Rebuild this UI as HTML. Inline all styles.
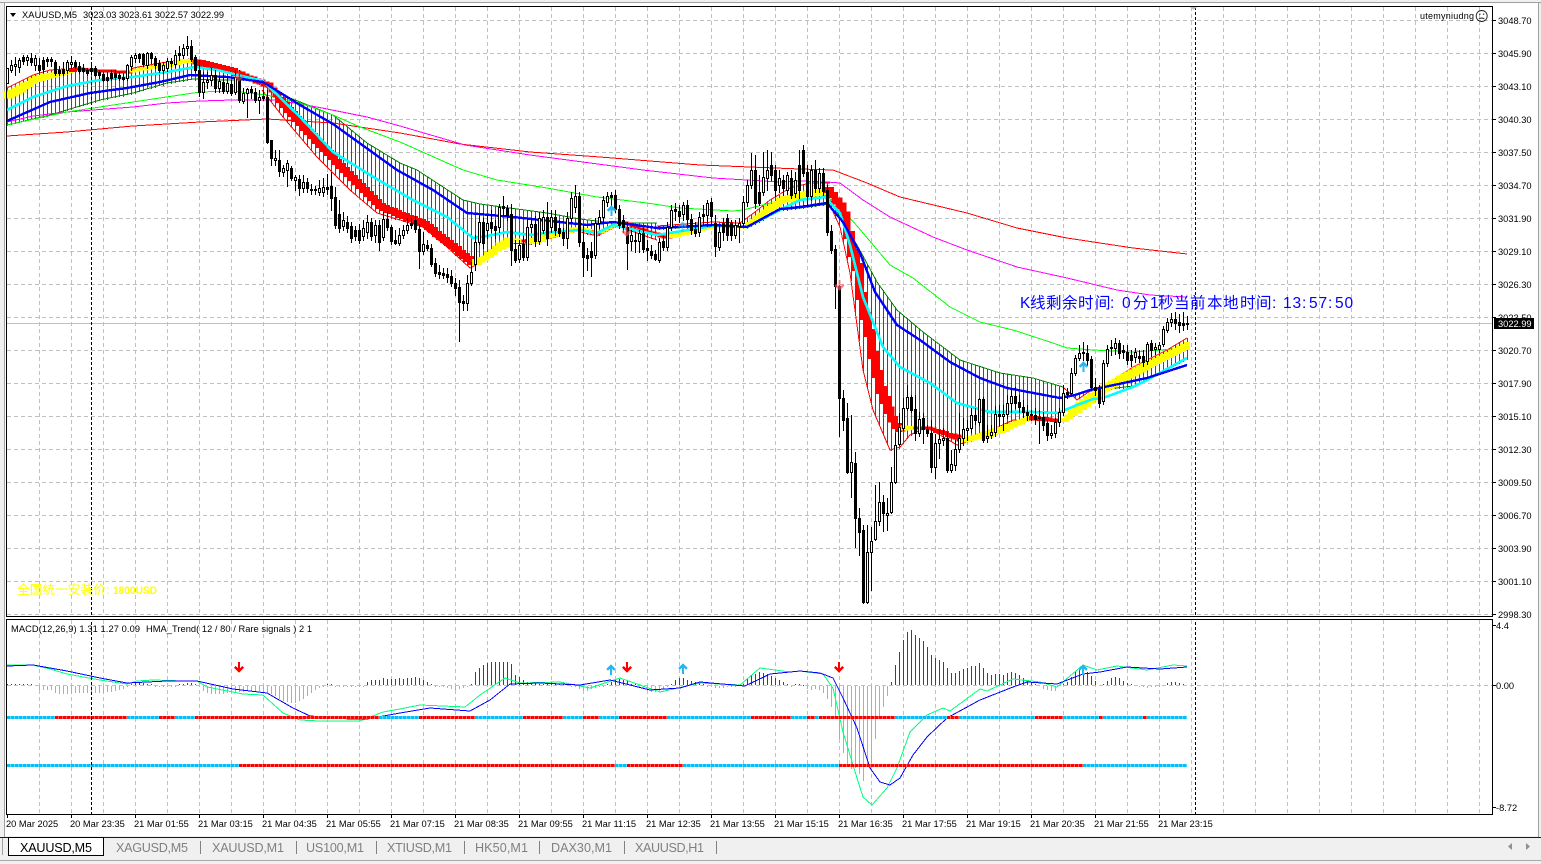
<!DOCTYPE html>
<html><head><meta charset="utf-8"><title>XAUUSD,M5</title>
<style>
html,body{margin:0;padding:0;background:#f0f0f0;width:1541px;height:864px;overflow:hidden}
svg{display:block;position:absolute;left:0;top:0}
text{font-family:"Liberation Sans","Noto Sans CJK SC",sans-serif}
.p{font-size:9.3px;fill:#000}
.t{font-size:9.3px;fill:#000}
.tab{font-size:12.6px;fill:#808080}
</style></head><body>
<svg id="s" width="1541" height="864" viewBox="0 0 1541 864" xmlns="http://www.w3.org/2000/svg">
<rect x="0" y="0" width="1541" height="864" fill="#f0f0f0"/>
<rect x="5" y="3" width="1533" height="833" fill="#fff"/>
<rect x="0" y="2" width="1541" height="1" fill="#a0a0a0"/>
<rect x="4" y="3" width="1" height="834" fill="#a0a0a0"/>
<rect x="1538" y="3" width="1" height="834" fill="#a0a0a0"/>
<g id="grid" shape-rendering="crispEdges"></g>
<g id="ind" shape-rendering="crispEdges"></g>
<g id="cd" shape-rendering="crispEdges"></g>
<g id="sub" shape-rendering="crispEdges"></g>
<g id="fr" shape-rendering="crispEdges"></g>

<path d="M10 13h6l-3 4z" fill="#000"/>
<text x="22" y="18" font-size="9.3" fill="#000" textLength="55" lengthAdjust="spacing">XAUUSD,M5</text>
<text x="83" y="18" font-size="9.3" fill="#000" textLength="141" lengthAdjust="spacing">3023.03 3023.61 3022.57 3022.99</text>
<text x="1420" y="19" font-size="9" fill="#000" textLength="54" lengthAdjust="spacing">utemyniudng</text>
<g fill="none" stroke="#222" stroke-width=".9"><circle cx="1481.700" cy="16" r="5.500"/><path d="M1479 19q2.700-2 5.400 0"/></g>
<circle cx="1479.800" cy="14.200" r=".7" fill="#222"/><circle cx="1483.600" cy="14.200" r=".7" fill="#222"/>

<text y="308" font-size="15.500" fill="#0000ff" x="1020 1030 1046 1062 1078 1095 1110 1116 1122 1133 1150 1158 1174 1190 1207 1223 1240 1256 1272 1278 1283 1292.500 1302 1309 1318.500 1328 1335 1344.500">K线剩余时间: 0分1秒当前本地时间: 13:57:50</text>
<text y="594" font-size="12.700" fill="#ffff00" x="17 29.700 42.400 55.100 67.800 80.500 93.200 106">全国统一安装价:</text>
<text x="113" y="594" font-size="11" font-weight="bold" fill="#ffff00" textLength="44" lengthAdjust="spacingAndGlyphs">1800USD</text>
<text x="11" y="632" font-size="9.300" fill="#000" textLength="129" lengthAdjust="spacing">MACD(12,26,9) 1.31 1.27 0.09</text>
<text x="146" y="632" font-size="9.300" fill="#000" textLength="166" lengthAdjust="spacing">HMA_Trend( 12 / 80 / Rare signals ) 2 1</text>

<g class="p">
<text x="1498" y="24" class="p">3048.70</text><text x="1498" y="57" class="p">3045.90</text><text x="1498" y="90" class="p">3043.10</text><text x="1498" y="123" class="p">3040.30</text><text x="1498" y="156" class="p">3037.50</text><text x="1498" y="189" class="p">3034.70</text><text x="1498" y="222" class="p">3031.90</text><text x="1498" y="255" class="p">3029.10</text><text x="1498" y="288" class="p">3026.30</text><text x="1498" y="321" class="p">3023.50</text><text x="1498" y="354" class="p">3020.70</text><text x="1498" y="387" class="p">3017.90</text><text x="1498" y="420" class="p">3015.10</text><text x="1498" y="453" class="p">3012.30</text><text x="1498" y="486" class="p">3009.50</text><text x="1498" y="519" class="p">3006.70</text><text x="1498" y="552" class="p">3003.90</text><text x="1498" y="585" class="p">3001.10</text><text x="1498" y="618" class="p">2998.30</text>
</g>
<rect x="1494" y="318" width="40" height="11" fill="#000"/>
<text x="1498" y="327" class="p" style="fill:#fff">3022.99</text>
<text x="1496" y="629" class="p">4.4</text>
<text x="1496" y="689" class="p">0.00</text>
<text x="1496" y="811" class="p">-8.72</text>

<g class="t">
<text x="6" y="827" class="t">20 Mar 2025</text><text x="70" y="827" class="t">20 Mar 23:35</text><text x="134" y="827" class="t">21 Mar 01:55</text><text x="198" y="827" class="t">21 Mar 03:15</text><text x="262" y="827" class="t">21 Mar 04:35</text><text x="326" y="827" class="t">21 Mar 05:55</text><text x="390" y="827" class="t">21 Mar 07:15</text><text x="454" y="827" class="t">21 Mar 08:35</text><text x="518" y="827" class="t">21 Mar 09:55</text><text x="582" y="827" class="t">21 Mar 11:15</text><text x="646" y="827" class="t">21 Mar 12:35</text><text x="710" y="827" class="t">21 Mar 13:55</text><text x="774" y="827" class="t">21 Mar 15:15</text><text x="838" y="827" class="t">21 Mar 16:35</text><text x="902" y="827" class="t">21 Mar 17:55</text><text x="966" y="827" class="t">21 Mar 19:15</text><text x="1030" y="827" class="t">21 Mar 20:35</text><text x="1094" y="827" class="t">21 Mar 21:55</text><text x="1158" y="827" class="t">21 Mar 23:15</text>
</g>

<g shape-rendering="crispEdges">
<rect x="0" y="837" width="1541" height="1" fill="#1a1a1a"/>
<rect x="0" y="838" width="1541" height="22" fill="#f0f0f0"/>
<rect x="0" y="860" width="1541" height="1" fill="#a8a8a8"/>
<rect x="2" y="838" width="1" height="17" fill="#a0a0a0"/>
<rect x="8" y="837" width="96" height="19" fill="#000"/>
<rect x="9" y="838" width="94" height="17" fill="#fff"/>
<rect x="200" y="841" width="1" height="13" fill="#808080"/><rect x="296" y="841" width="1" height="13" fill="#808080"/><rect x="376" y="841" width="1" height="13" fill="#808080"/><rect x="464" y="841" width="1" height="13" fill="#808080"/><rect x="539" y="841" width="1" height="13" fill="#808080"/><rect x="624" y="841" width="1" height="13" fill="#808080"/><rect x="716" y="841" width="1" height="13" fill="#808080"/>
</g>
<text x="20" y="852" font-size="12.600" fill="#000" textLength="72" lengthAdjust="spacing">XAUUSD,M5</text>
<text x="116" y="852" class="tab" textLength="72" lengthAdjust="spacing">XAGUSD,M5</text>
<text x="212" y="852" class="tab" textLength="72" lengthAdjust="spacing">XAUUSD,M1</text>
<text x="306" y="852" class="tab" textLength="58" lengthAdjust="spacing">US100,M1</text>
<text x="387" y="852" class="tab" textLength="65" lengthAdjust="spacing">XTIUSD,M1</text>
<text x="475" y="852" class="tab" textLength="53" lengthAdjust="spacing">HK50,M1</text>
<text x="551" y="852" class="tab" textLength="61" lengthAdjust="spacing">DAX30,M1</text>
<text x="635" y="852" class="tab" textLength="69" lengthAdjust="spacing">XAUUSD,H1</text>
<path d="M1512 843v7l-4-3.500zM1526 843v7l4-3.500z" fill="#909090"/>
<path d="M1190 7h7l-3.500 3z" fill="#c0c0c0"/>
</svg>
<script>
var NS="http://www.w3.org/2000/svg";
function el(g,t,a){var e=document.createElementNS(NS,t);for(var k in a)e.setAttribute(k,a[k]);document.getElementById(g).appendChild(e);return e}
function R(g,x,y,w,h,f){el(g,'rect',{x:x,y:y,width:w,height:h,fill:f})}
function I(p,x){for(var i=0;i<p.length-1;i++){if(x<=p[i+1][0]){if(x<p[i][0])return p[i][1];var t=(x-p[i][0])/(p[i+1][0]-p[i][0]);return p[i][1]+t*(p[i+1][1]-p[i][1])}}return p[p.length-1][1]}
function PP(s){return s.trim().split(/\s+/).map(function(a){var b=a.split(',');return[+b[0],+b[1]]})}
function L(g,p,c,w){el(g,'polyline',{points:p.map(function(a){return a.join(',')}).join(' '),fill:'none',stroke:c,'stroke-width':w||1,'stroke-linejoin':'round'})}

// grid
var i,x,y,d;
for(y=20;y<=614;y+=33)el('grid','line',{x1:7,x2:1492,y1:y+.5,y2:y+.5,stroke:'#c0c0c0','stroke-dasharray':'4 3'});
for(x=39;x<1492;x+=32){
 el('grid','line',{x1:x+.5,x2:x+.5,y1:7,y2:616,stroke:'#c0c0c0','stroke-dasharray':'4 3'});
 el('grid','line',{x1:x+.5,x2:x+.5,y1:620,y2:814,stroke:'#c0c0c0','stroke-dasharray':'4 3'});
}
el('grid','line',{x1:7,x2:1492,y1:685.5,y2:685.5,stroke:'#c0c0c0','stroke-dasharray':'4 3'});
R('grid',7,323,1485,1,'#c0c0c0');

// MAs
var RED=PP('7,136 67,132 133,126 200,122 267,119 333,123 400,133 460,144 530,152 600,157 700,165 800,169 833,170 867,183 900,197 967,213 1017,228 1067,238 1133,248 1187,254');
var MAG=PP('7,122 33,116 67,112 133,107 167,103 200,101 233,100 277,100 317,107 367,117 400,126 465,145 530,155 643,170 713,178 780,182 800,181 827,182 840,183 863,200 890,217 933,237 967,250 1017,267 1067,278 1117,290 1150,295 1187,297');
var GRN=PP('7,125 67,112 133,102 200,92 233,91 267,95 300,103 333,115 360,127 400,142 463,170 497,180 547,188 597,197 647,203 680,208 733,211 743,210 790,198 825,195 840,207 858,227 890,265 913,278 950,307 980,322 1013,330 1050,342 1067,348 1093,350 1133,352 1187,348');

// hatch
var BLUE=PP('7,121 50,102 90,93 127,88 160,82 190,75 227,77 263,82 300,105 333,124 397,170 433,190 467,213 513,217 587,225 613,222 657,228 713,225 747,227 780,209 800,207 827,203 843,222 860,253 875,292 897,325 920,340 950,362 980,378 1007,388 1060,398 1075,395 1090,390 1133,381 1147,378 1187,365');
var CY=PP('7,110 33,97 67,86 100,80 133,77 167,72 195,67 217,70 263,81 300,117 333,152 367,173 380,181 413,200 447,217 473,238 487,236 507,232 530,235 553,232 580,230 597,233 613,225 657,235 713,226 747,227 780,210 800,200 825,197 840,213 850,245 863,297 883,347 900,367 930,383 957,403 990,412 1033,412 1058,413 1077,405 1093,399 1103,398 1133,387 1147,380 1167,369 1187,358');
var HMA=PP('7,95 20,88 33,80 53,74 77,69 100,71 127,72 133,70 160,66 190,60 200,63 233,72 253,80 267,85 287,110 317,143 350,177 380,207 423,224 447,243 472,263 480,260 508,240 525,241 530,241 577,228 593,233 597,233 617,223 623,223 665,238 670,236 713,226 743,227 780,200 827,190 842,210 850,250 855,267 860,303 867,333 872,360 878,387 888,413 897,430 903,428 913,428 927,428 957,438 963,440 1000,430 1027,418 1033,418 1057,420 1063,420 1083,403 1097,393 1100,390 1130,373 1187,345');
var TH=PP('7,7 60,5 75,3 130,3 190,4 200,6 262,5 290,6 470,6 480,5 505,7 510,3 525,3 530,6 580,4 600,3 660,3 680,4 740,3 770,6 800,7 827,6 850,8 880,8 900,5 913,3 927,3 957,5 1000,6 1027,4 1060,3 1080,8 1100,7 1187,6');
var T1=PP('7,88 33,75 50,70 80,68 100,70 127,73 133,68 160,63 190,59 200,60 233,70 262,85');
var B1=PP('7,125 50,115 100,100 133,93 167,83 193,79 220,80 253,80 262,84');
var T2=PP('262,85 290,98 333,115 367,143 400,163 417,170 463,200 480,204 547,213 580,219 613,223 657,223');
var B2=PP('262,90 283,117 317,157 350,190 377,213 423,227 447,247 470,268 480,263 508,243 530,244 577,231 597,236 617,226 657,240');
var T3=PP('657,226 713,222 740,223 755,212 770,200 790,188 810,183 830,183');
var B3=PP('657,229 713,226 747,228 780,210 800,208 830,204');
var T4=PP('830,200 833,205 857,245 877,282 897,310 923,332 960,360 1000,373 1033,378 1063,387');
var B4=PP('830,205 840,227 850,273 863,370 873,410 890,450 900,447 910,435 927,427 940,435 957,445 967,442 1013,420 1033,420 1060,422');
var T5=PP('1063,387 1077,400 1087,393 1113,380 1133,367 1167,350 1187,338');
var B5=PP('1063,398 1083,392 1133,386 1187,359');
function hatch(a,b,c,x0,x1){for(var x=x0;x<=x1;x+=4){var t=I(a,x),u=I(b,x);R('ind',x,Math.round(Math.min(t,u)),1,Math.round(Math.abs(u-t))+1,c)}}
hatch(T1,B1,'#ff0000',7,259);
hatch(T2,B2,'#008000',263,655);
hatch(T3,B3,'#ff0000',659,827);
hatch(T4,B4,'#008000',831,1059);
hatch(T5,B5,'#ff0000',1063,1187);
L('ind',T1,'#ff0000');L('ind',B1,'#008000');
L('ind',T2,'#008000');L('ind',B2,'#ff0000');
L('ind',T3,'#ff0000');L('ind',B3,'#008000');
L('ind',T4,'#008000');L('ind',B4,'#ff0000');
L('ind',T5,'#ff0000');L('ind',B5,'#008000');

L('ind',RED,'#ff0000');L('ind',MAG,'#ff00ff');L('ind',GRN,'#00ff00');

// HMA band
var seg=[[70,'#ffff00'],[130,'#ff0000'],[195,'#ffff00'],[475,'#ff0000'],[522,'#ffff00'],[530,'#ff0000'],[590,'#ffff00'],[597,'#ff0000'],[620,'#ffff00'],[668,'#ff0000'],[827,'#ffff00'],[900,'#ff0000'],[915,'#ffff00'],[960,'#ff0000'],[1030,'#ffff00'],[1060,'#ff0000'],[1190,'#ffff00']];
function hc(x){for(var k=0;k<seg.length;k++)if(x<seg[k][0])return seg[k][1];return '#ffff00'}
for(x=7;x<1187;x+=4){var y0=Math.round(I(HMA,x)),y1=Math.round(I(HMA,x+4));
 el('ind','path',{d:'M'+x+' '+y0+'H'+(x+4)+'V'+y1,fill:'none',stroke:hc(x),'stroke-width':Math.round(I(TH,x)),'stroke-linecap':'square'})}
L('ind',CY,'#00ffff',2.6);
L('ind',BLUE,'#0000ff',2.4);

// candles: x kind top bottom [wickTop wickBottom]
var C="7 w 68 83;11 w 65 70 60 72;15 w 64 66 57 75;19 w 60 67 58 72;23 b 57 61 55 64;27 w 57 60 55 65;31 b 58 62 53 65;35 w 58 65 55 70;39 b 65 70 58 72;43 b 60 69 57 72;47 b 59 61 57 66;51 b 59 61 57 66;55 b 62 73 60 75;59 b 70 73 66 75;63 b 69 73 62 75;67 w 62 70 60 73;71 w 62 64 56 68;75 b 62 66 60 68;79 b 66 71 62 73;83 b 68 71 64 72;87 b 70 73 68 75;91 b 68 71 65 73;95 b 68 75 66 76;99 b 72 75 70 78;103 b 74 80 72 81;107 b 77 80 72 81;111 b 73 78 70 80;115 b 73 77 70 79;119 b 75 78 72 80;123 b 77 79 73 80;127 w 65 78 64 80;131 w 57 66 55 70;135 w 55 58 53 62;139 b 54 58 53 62;143 b 54 64 53 66;147 w 53 65 52 68;151 b 53 58 52 63;155 b 58 65 56 68;159 b 63 70 60 72;163 w 65 70 62 73;167 w 61 68 58 71;171 b 61 63 58 66;175 w 55 64 50 67;179 b 53 55 46 60;183 w 48 55 44 58;187 w 46 48 36 55;191 b 46 59 40 61;195 b 57 70 55 72;199 b 70 92 60 96;203 w 82 92 72 98;207 w 80 82 72 88;211 w 75 80 68 85;215 b 75 88 70 92;219 w 81 88 76 92;223 b 82 91 75 93;227 w 83 91 78 93;231 b 84 93 80 95;235 w 77 92 70 94;239 b 77 100 70 102;243 w 93 101 88 103;247 w 89 93 88 117;251 b 89 92 86 98;255 b 92 100 88 102;259 w 97 100 90 113;263 b 96 98 90 100;267 b 97 142 90 143;271 b 140 158 140 165;275 w 158 160 150 165;279 b 160 171 150 176;283 w 168 172 165 176;287 w 163 170 160 186;291 b 168 178 166 180;295 w 177 180 175 190;299 b 179 188 175 195;303 w 182 188 175 192;307 b 182 188 178 192;311 b 189 190 184 194;315 b 189 190 186 194;319 w 188 192 180 195;323 w 187 192 178 196;327 b 187 189 174 194;331 b 186 198 172 210;335 b 197 225 187 228;339 b 214 228 200 232;343 w 220 226 212 230;347 b 222 228 216 232;351 b 226 238 222 242;355 b 230 236 226 240;359 b 230 240 224 243;363 w 228 236 220 240;367 w 222 232 215 238;371 b 222 236 218 240;375 w 225 235 220 242;379 b 225 242 220 250;383 w 219 237 212 240;387 b 219 227 212 230;391 b 227 241 225 244;395 b 240 243 230 244;399 w 235 243 228 245;403 w 230 235 225 238;407 w 225 230 218 233;411 b 223 225 218 228;415 b 220 229 216 232;419 b 229 251 224 268;423 w 244 251 232 254;427 b 245 248 240 250;431 b 248 264 244 266;435 b 263 273 258 276;439 b 272 274 265 278;443 b 273 275 268 278;447 b 274 277 268 282;451 b 276 283 270 286;455 b 283 288 278 295;459 b 287 302 280 341;463 b 301 303 295 310;467 w 283 303 275 310;471 w 272 283 262 285;475 w 242 264 235 270;479 w 222 242 215 244;483 b 222 243 218 248;487 w 223 230 215 238;491 b 222 228 210 232;495 b 226 230 220 238;499 w 207 227 204 232;503 b 206 208 196 215;507 b 208 215 205 220;511 b 214 250 204 265;515 b 249 260 240 262;519 w 245 259 240 262;523 b 244 257 236 260;527 w 227 257 218 260;531 w 224 227 218 232;535 b 224 241 216 246;539 w 218 241 212 244;543 w 217 230 210 233;547 b 217 238 202 245;551 w 217 227 210 232;555 b 217 230 210 235;559 b 228 233 220 236;563 b 232 238 228 245;567 w 218 238 212 248;571 w 198 218 192 222;575 w 196 207 185 212;579 b 196 242 192 246;583 b 242 257 225 276;587 b 255 258 248 270;591 b 251 257 242 276;595 w 223 255 218 258;599 w 217 223 210 228;603 w 200 217 196 222;607 w 196 202 192 206;611 b 195 197 192 205;615 b 195 209 190 212;619 b 209 225 205 228;623 b 220 227 215 232;627 b 227 243 222 269;631 w 235 241 230 250;635 b 240 241 232 252;639 w 233 241 230 252;643 b 233 249 228 252;647 b 248 250 240 260;651 b 251 255 245 258;655 b 254 259 250 260;659 w 242 260 238 262;663 b 241 247 236 250;667 w 227 247 222 250;671 w 210 227 205 230;675 b 209 211 203 220;679 b 211 216 205 222;683 w 205 214 202 220;687 b 205 219 200 224;691 b 219 230 214 234;695 b 229 233 222 236;699 w 217 232 212 236;703 b 214 216 205 225;707 w 203 215 200 226;711 b 202 216 198 225;715 b 223 246 215 256;719 w 232 247 226 250;723 b 223 232 218 240;727 b 218 235 214 240;731 b 223 235 220 240;735 w 225 235 220 238;739 w 223 226 218 242;743 w 202 223 196 226;747 w 185 202 180 206;751 w 170 185 153 188;755 b 170 203 155 208;759 b 192 203 175 205;763 w 177 192 152 195;767 w 170 178 150 190;771 b 165 175 152 180;775 b 170 190 165 196;779 w 178 185 170 192;783 b 180 188 175 195;787 w 175 190 172 194;791 b 178 195 170 198;795 w 180 193 172 197;799 b 165 190 150 198;803 b 150 173 145 176;807 b 172 196 165 205;811 w 170 196 165 200;815 b 170 188 160 192;819 w 173 188 168 192;823 b 173 191 168 195;827 b 190 232 185 235;831 b 231 250 225 253;835 b 249 286 245 308;839 b 286 398 285 436;843 b 398 420 390 430;847 b 418 472 403 473;851 w 462 472 415 497;855 b 463 518 452 547;859 b 518 532 508 555;863 b 530 602 525 603;867 w 552 602 525 603;871 w 541 552 527 590;875 w 521 539 485 540;879 w 502 521 482 525;883 b 502 513 495 531;887 w 513 515 498 530;891 w 482 512 467 513;895 w 445 482 433 483;899 w 427 444 413 445;903 w 408 428 398 430;907 w 397 408 385 410;911 b 397 410 395 412;915 b 409 433 395 440;919 w 419 433 412 436;923 b 418 429 413 443;927 b 429 433 425 436;931 b 433 467 420 472;935 w 443 467 434 478;939 w 439 443 430 458;943 w 438 440 428 445;947 b 438 470 432 472;951 w 464 470 450 472;955 w 449 465 440 470;959 w 438 449 413 452;963 w 429 438 418 445;967 w 428 430 420 440;971 w 415 428 408 432;975 b 415 420 408 424;979 w 399 422 398 425;983 b 399 440 397 442;987 w 436 438 425 442;991 w 432 435 425 438;995 w 414 432 406 436;999 b 414 416 405 425;1003 w 414 416 405 430;1007 w 403 414 395 418;1011 w 396 403 390 412;1015 b 396 403 387 408;1019 b 402 407 395 412;1023 b 407 412 400 417;1027 b 412 415 405 420;1031 b 414 415 410 420;1035 b 415 419 408 424;1039 w 417 418 410 443;1043 b 417 425 412 430;1047 b 423 435 420 440;1051 w 433 435 425 438;1055 w 422 433 418 437;1059 w 412 422 408 426;1063 w 393 412 385 415;1067 b 392 394 388 398;1071 w 373 393 368 395;1075 w 358 373 355 375;1079 w 353 358 345 360;1083 b 352 353 342 360;1087 b 353 360 345 365;1091 b 359 387 356 390;1095 b 387 390 378 395;1099 b 389 403 385 407;1103 w 363 401 360 404;1107 w 349 363 345 366;1111 b 347 348 340 355;1115 w 343 348 338 354;1119 b 343 353 340 358;1123 b 350 352 345 358;1127 b 352 360 345 364;1131 b 355 360 350 366;1135 w 352 357 348 362;1139 b 356 358 350 362;1143 b 356 362 350 366;1147 w 344 361 342 364;1151 b 343 350 340 356;1155 w 347 349 343 354;1159 w 345 349 342 352;1163 w 329 344 326 346;1167 w 322 330 318 332;1171 w 319 322 313 326;1175 b 319 323 312 329;1179 b 322 325 314 332;1183 b 323 325 312 330;1187 b 323 324 316 329";
C.split(';').forEach(function(s){var a=s.trim().split(' ');var x=+a[0],t=+a[2],b=+a[3],wt=a[4]?+a[4]:t,wb=a[5]?+a[5]:b;
 R('cd',x,wt,1,wb-wt+1,'#000');
 R('cd',x-1,t,3,Math.max(1,b-t+1),'#000');
 if(a[1]=='w'&&b-t>=2)R('cd',x,t+1,1,b-t-1,'#fff');
});

// arrows
function arrow(g,x,y,c,up,o){var s=up?-1:1;
 el(g,'path',{d:'M'+x+' '+(y-s*5)+'V'+(y+s*4)+'M'+(x-4)+' '+(y+s*0)+'L'+x+' '+(y+s*4)+'L'+(x+4)+' '+(y+s*0),fill:'none',stroke:c,'stroke-width':2.2,opacity:o||1})}
arrow('fr',611.5,211,'#25b8f5',1);arrow('fr',1083.5,367,'#25b8f5',1);arrow('fr',682.5,227,'#25b8f5',1,.6);
arrow('fr',239,76,'#ff5060',0,.6);arrow('fr',626.5,231,'#ff5060',0,.7);arrow('fr',839.5,285,'#ff5060',0,.7);

// MACD histogram (x:y)
var H="7:684 11:684 15:684 19:684 23:684 27:684 31:684 39:689 43:689 47:689 51:689 55:692 59:693 63:693 67:693 71:693 75:692 79:692 83:692 87:692 91:692 95:692 99:692 103:692 107:691 111:691 115:690 119:689 123:688 127:686 131:684 135:683 139:683 143:683 147:684 151:684 155:686 159:686 163:686 167:686 171:686 175:686 179:684 183:684 187:683 191:683 195:684 199:686 203:690 207:692 211:693 215:693 219:693 223:693 227:692 231:692 235:691 239:691 243:691 247:690 251:690 255:690 259:690 263:691 267:692 271:693 275:695 279:698 283:700 287:701 291:702 295:702 299:700 303:698 307:695 311:692 315:689 319:687 323:686 327:684 331:684 335:686 339:686 343:686 347:686 351:686 355:686 359:686 363:686 367:682 371:680 375:680 379:680 383:678 387:679 391:679 395:679 399:678 403:679 407:678 411:678 415:677 419:678 423:680 427:682 431:684 435:686 439:686 443:686 447:687 451:688 455:689 459:688 463:687 467:686 471:684 475:672 479:668 483:665 487:663 491:662 495:662 499:662 503:662 507:662 511:664 515:675 519:677 523:680 527:682 531:683 535:683 539:684 543:684 547:682 551:682 555:683 559:684 563:684 567:684 571:686 575:686 579:688 583:690 587:690 591:688 595:687 599:686 603:686 607:684 611:682 615:680 619:679 623:680 627:681 631:684 635:684 639:686 643:688 647:690 651:691 655:691 659:690 663:688 667:686 671:684 675:680 679:678 683:678 687:680 691:681 695:682 699:683 703:684 707:686 711:686 715:687 719:687 723:687 727:686 731:686 735:686 739:685 743:684 747:678 751:675 755:674 759:672 763:673 767:674 771:676 775:678 779:680 783:682 787:684 791:686 795:684 799:684 803:685 807:688 811:689 815:688 819:689 823:692 827:698 831:706 835:715 839:738 843:752 847:763 851:768 855:767 859:773 863:780 867:765 871:762 875:738 879:718 883:706 887:695 891:682 895:665 899:652 903:640 907:632 911:630 915:635 919:638 923:641 927:647 931:655 935:658 939:660 943:662 947:668 951:673 955:673 959:671 963:669 967:668 971:666 975:666 979:663 983:668 987:673 991:675 995:674 999:674 1003:675 1007:673 1011:672 1015:673 1019:675 1023:678 1027:681 1031:683 1035:684 1043:688 1047:689 1051:690 1055:690 1063:684 1067:682 1071:677 1075:672 1079:670 1083:668 1087:672 1091:676 1095:681 1103:684 1107:681 1111:678 1115:677 1119:678 1123:681 1127:683 1131:684 1139:686 1143:686 1147:687 1151:686 1155:686 1159:686 1167:683 1171:682 1175:682 1179:683 1183:684";
H.split(' ').forEach(function(s){var a=s.split(':'),x=+a[0],v=+a[1];
 if(v<685)R('sub',x,v,1,685-v,'#e00000');else if(v>685)R('sub',x,686,1,v-685,'#20e8f0');else R('sub',x,685,1,1,'#e00000')});

// macd lines
var MB=PP('7,666 33,665 67,671 100,678 127,683 167,681 197,681 233,689 267,693 293,708 310,716 350,719 367,719 400,713 430,708 470,711 490,700 510,684 540,683 580,685 610,680 650,690 680,688 700,682 745,686 770,674 800,671 820,673 833,678 843,698 857,728 870,768 880,782 890,785 900,778 913,755 927,737 947,718 980,700 1013,687 1027,682 1057,684 1083,674 1100,672 1127,667 1160,669 1187,667');
var MG=PP('7,665 33,665 50,669 67,674 100,680 127,684 137,681 153,680 183,681 197,681 207,687 243,694 263,695 283,713 300,720 320,721 360,721 383,712 400,709 420,705 465,707 480,695 505,678 520,683 560,682 590,688 620,678 660,692 700,683 740,685 760,668 790,672 800,671 823,674 833,688 843,732 857,778 863,797 872,805 887,788 897,768 910,732 927,715 943,708 950,711 980,689 987,691 1013,679 1040,682 1057,687 1083,665 1097,670 1117,666 1147,670 1173,665 1187,666');
L('sub',MG,'#00ff7f');L('sub',MB,'#0000ff');

// dotted bands
var S1=[[53,'c'],[125,'r'],[157,'c'],[173,'r'],[193,'c'],[378,'r'],[418,'c'],[472,'r'],[520,'c'],[562,'r'],[582,'c'],[597,'r'],[617,'c'],[665,'r'],[748,'c'],[790,'r'],[805,'c'],[812,'r'],[817,'c'],[892,'r'],[945,'c'],[956,'r'],[1033,'c'],[1060,'r'],[1097,'c'],[1100,'r'],[1142,'c'],[1145,'r'],[1190,'c']];
var S2=[[236,'c'],[612,'r'],[625,'c'],[680,'r'],[837,'c'],[1080,'r'],[1190,'c']];
function band(S,y){for(var x=7;x<1185;x+=4){var k='c';for(var j=0;j<S.length;j++)if(x<S[j][0]){k=S[j][1];break}
 R('sub',x,y,3,3,k=='c'?'#00bfff':'#ff0000');
 R('sub',x+3,y,1,3,k=='c'?'#60d8f8':'#ff6060')}}
band(S1,716);band(S2,764);
arrow('sub',239,667,'#ff0000',0);arrow('sub',611,670,'#25b8f5',1);arrow('sub',627,667,'#ff0000',0);arrow('sub',683,669,'#25b8f5',1);arrow('sub',839,667,'#ff0000',0);arrow('sub',1083,670,'#25b8f5',1);

// frame
var c='#000';
R('fr',6,6,1487,1,c);R('fr',6,616,1487,1,c);R('fr',6,6,1,611,c);R('fr',1492,6,1,611,c);
R('fr',6,619,1487,1,c);R('fr',6,814,1487,1,c);R('fr',6,619,1,196,c);R('fr',1492,619,1,196,c);
for(y=20;y<=614;y+=33)R('fr',1493,y,3,1,c);
R('fr',1493,685,3,1,c);R('fr',1493,625,3,1,c);R('fr',1493,807,3,1,c);
for(x=7;x<1190;x+=64)R('fr',x,815,1,3,c);
[91,1195].forEach(function(X){for(var y=7;y<814;y+=5){if(y>616&&y<619)continue;R('fr',X,y,1,3,c)}});
</script>
</body></html>
